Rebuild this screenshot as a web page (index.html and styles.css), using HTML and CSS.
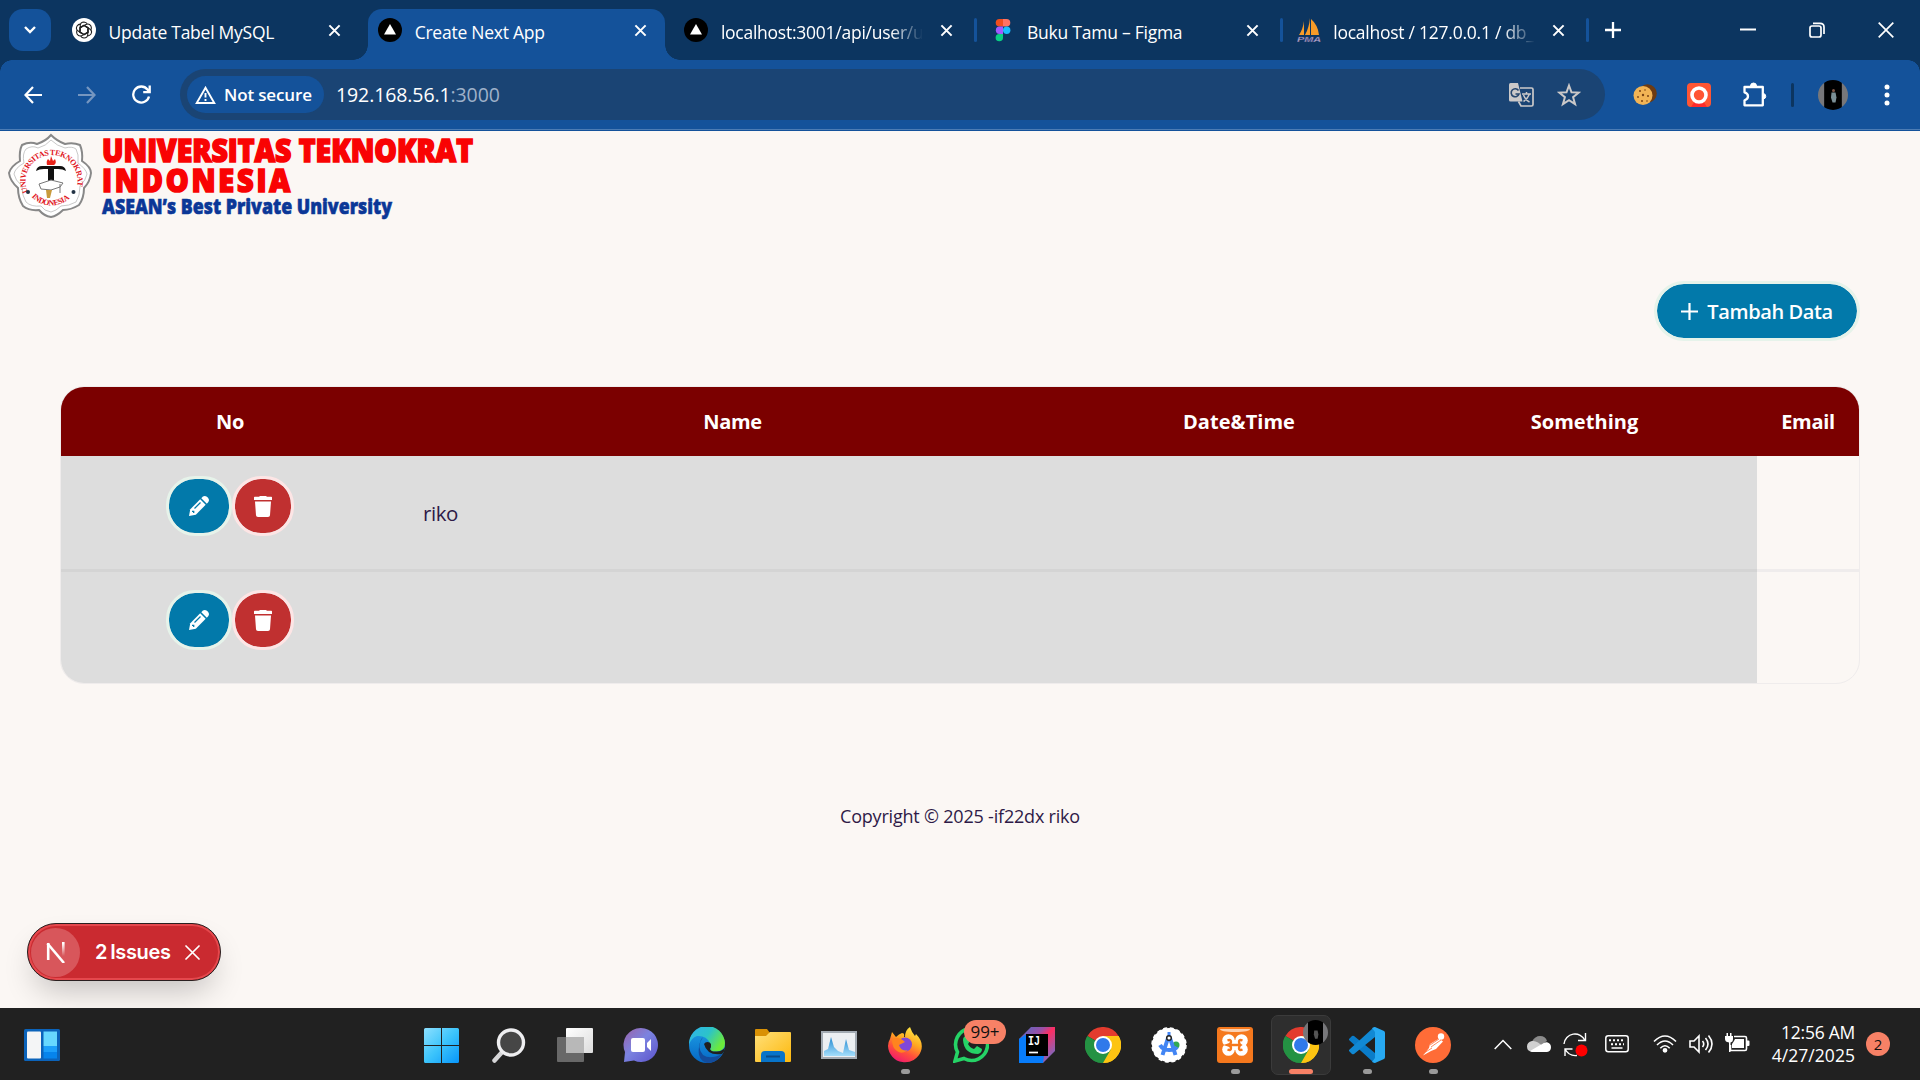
FILE: index.html
```html
<!DOCTYPE html>
<html lang="en">
<head>
<meta charset="utf-8">
<title>Create Next App</title>
<link rel="stylesheet" href="styles.css">
</head>
<body>
<svg width="0" height="0" class="defs" aria-hidden="true">
  <defs>
    <linearGradient id="win" x1="0" y1="0" x2="1" y2="1"><stop offset="0" stop-color="#8de0ff"/><stop offset=".5" stop-color="#3cc4fb"/><stop offset="1" stop-color="#0795fb"/></linearGradient>
    <linearGradient id="grey" x1="0" y1="0" x2="1" y2="1"><stop offset="0" stop-color="#fff"/><stop offset="1" stop-color="#dcdcdc"/></linearGradient>
    <linearGradient id="chat" x1="0" y1="0" x2="1" y2="1"><stop offset="0" stop-color="#9b62a8"/><stop offset=".45" stop-color="#7b83e0"/><stop offset="1" stop-color="#5b52cc"/></linearGradient>
    <linearGradient id="edgeTop" x1="0" y1="0" x2="1" y2=".5"><stop offset="0" stop-color="#2fb2ef"/><stop offset=".55" stop-color="#2cc3c9"/><stop offset="1" stop-color="#6bea3c"/></linearGradient>
    <linearGradient id="edgeBody" x1="0" y1="0" x2="0" y2="1"><stop offset="0" stop-color="#1fa0e6"/><stop offset="1" stop-color="#0567c4"/></linearGradient>
    <linearGradient id="folder" x1="0" y1="0" x2="1" y2="1"><stop offset="0" stop-color="#ffe07a"/><stop offset="1" stop-color="#fdb80c"/></linearGradient>
    <linearGradient id="fox" x1=".8" y1="0" x2=".3" y2="1"><stop offset="0" stop-color="#fff04a"/><stop offset=".4" stop-color="#ffa81f"/><stop offset=".7" stop-color="#ff4f3c"/><stop offset="1" stop-color="#f0176f"/></linearGradient>
    <linearGradient id="ij" x1="0" y1="0" x2="1" y2="1"><stop offset="0" stop-color="#4b6fc8"/><stop offset=".35" stop-color="#9a4fa6"/><stop offset=".5" stop-color="#fe2d62"/><stop offset="1" stop-color="#4f7ce0"/></linearGradient>
    <linearGradient id="wave" x1="0" y1="0" x2="0" y2="1"><stop offset="0" stop-color="#2489cf"/><stop offset="1" stop-color="#a4defc"/></linearGradient>
    <linearGradient id="nfade" x1="0" y1="0" x2="0" y2="1"><stop offset=".1" stop-color="#fff"/><stop offset="1" stop-color="#fff" stop-opacity="0"/></linearGradient>
    <linearGradient id="person" x1="0" y1="0" x2="1" y2="0"><stop offset=".2" stop-color="#77777a"/><stop offset=".22" stop-color="#000"/><stop offset=".78" stop-color="#000"/><stop offset=".8" stop-color="#77777a"/></linearGradient>
    <symbol id="x" viewBox="0 0 14 14"><path d="M1.500 1.500l11 11M12.500 1.500l-11 11" stroke="#fff" stroke-width="2.200" fill="none"/></symbol>
    <symbol id="vercel" viewBox="0 0 24 24"><circle cx="12" cy="12" r="12"/><path d="M12 6l6 10.500H6z" fill="#fff"/></symbol>
    <symbol id="pencil" viewBox="0 0 22 22"><path d="M1 21l1.300-6.800L12.200 4.300l5.500 5.500L7.800 19.700z"/><path d="M13.300 3.200l1.600-1.600q2-1.400 4 .2l1.300 1.300q1.600 2 .2 4l-1.600 1.600z"/><path d="M6.500 13.500l6-6M4 16.300h1.700V18" stroke="#0279aa" stroke-width="1.300" fill="none"/></symbol>
    <symbol id="trash" viewBox="0 0 18 21"><path d="M0 1.500q0-.7.700-.7H5L6 0h6l1 .8h4.300q.7 0 .7.700V4H0zM1 5.500h16l-1 13.700q-.1 1.800-2 1.800H4q-1.900 0-2-1.800z"/></symbol>
    <symbol id="chrome" viewBox="0 0 36 36"><path d="M18 18L2.400 9A18 18 0 0 1 33.600 9z" fill="#e33b2e"/><path d="M18 18L33.600 9A18 18 0 0 1 18 36z" fill="#fdc412"/><path d="M18 18v18A18 18 0 0 1 2.400 9z" fill="#249243"/><path d="M18 9h15.600A18 18 0 0 1 18 36l7.800-13.500z" fill="#fdc412"/><path d="M10.200 22.500L2.400 9A18 18 0 0 0 18 36l7.800-13.500z" fill="#249243"/><circle cx="18" cy="18" r="9" fill="#fff"/><circle cx="18" cy="18" r="7" fill="#3079ea"/></symbol>
  </defs>
</svg>

<header class="tabstrip">
  <button class="tabsearch"><svg width="14" height="10" viewBox="0 0 14 10"><path d="M2 2l5 5 5-5" stroke="#fff" stroke-width="2.400" fill="none"/></svg></button>
  <div class="tab">
    <svg class="fav" viewBox="0 0 24 24"><circle cx="12" cy="12" r="12" fill="#fff"/><g fill="none" stroke="#222" stroke-width="1.100"><path id="knot" d="M8.200 13.500V7.500Q8.500 4 12 4q2.200.2 3.200 1.800M8.200 9.500L12 7.300l4.500 2.600"/><use href="#knot" transform="rotate(60 12 12)"/><use href="#knot" transform="rotate(120 12 12)"/><use href="#knot" transform="rotate(180 12 12)"/><use href="#knot" transform="rotate(240 12 12)"/><use href="#knot" transform="rotate(300 12 12)"/></g></svg>
    <span class="tabname">Update Tabel MySQL</span><svg class="close"><use href="#x"/></svg>
  </div>
  <div class="tab active">
    <svg class="fav"><use href="#vercel"/></svg>
    <span class="tabname">Create Next App</span><svg class="close"><use href="#x"/></svg>
  </div>
  <div class="tab">
    <svg class="fav"><use href="#vercel"/></svg>
    <span class="tabname fade">localhost:3001/api/user/u</span><svg class="close"><use href="#x"/></svg><i class="sep"></i>
  </div>
  <div class="tab">
    <svg class="fav" viewBox="0 0 24 24"><path d="M12 1H8.500a3.800 3.800 0 0 0 0 7.600H12z" fill="#f24e1e"/><path d="M12 1h3.500a3.800 3.800 0 0 1 0 7.600H12z" fill="#ff7262"/><path d="M12 8.600H8.500a3.600 3.600 0 0 0 0 7.300H12z" fill="#a259ff"/><circle cx="15.700" cy="12.200" r="3.700" fill="#1abcfe"/><path d="M8.500 15.900H12v3.600a3.700 3.700 0 1 1-3.500-3.600z" fill="#0acf83"/></svg>
    <span class="tabname">Buku Tamu – Figma</span><svg class="close"><use href="#x"/></svg><i class="sep"></i>
  </div>
  <div class="tab">
    <svg class="fav" viewBox="0 0 24 24"><path d="M7 3v14H2q4-6 5-14zM13 0v17H8q4-7 5-17zM14 1q7 6 8 16h-8z" fill="#f79b28"/><text x="0" y="24" class="pma" textLength="24" lengthAdjust="spacingAndGlyphs">PMA</text></svg>
    <span class="tabname fade">localhost / 127.0.0.1 / db_</span><svg class="close"><use href="#x"/></svg><i class="sep"></i>
  </div>
  <svg class="plus" viewBox="0 0 16 16"><path d="M8 0v16M0 8h16" stroke="#fff" stroke-width="2.300"/></svg>
  <div class="winbtns">
    <svg width="16" height="16" viewBox="0 0 16 16"><path d="M0 7.500h16" stroke="#fff" stroke-width="2"/></svg>
    <svg width="16" height="16" viewBox="0 0 16 16" fill="none" stroke="#fff" stroke-width="1.700"><rect x="1" y="4" width="11" height="11" rx="2"/><path d="M4 1.300h7Q15 1.300 15 5v7"/></svg>
    <svg width="16" height="16" viewBox="0 0 16 16"><path d="M.7.7l14.600 14.600M15.300.7L.7 15.300" stroke="#fff" stroke-width="1.700"/></svg>
  </div>
</header>

<nav class="toolbar">
  <div class="navbtns">
    <svg width="18" height="18" viewBox="0 0 18 18" fill="none" stroke="#fff" stroke-width="2.200"><path d="M18 9H1.500M9 1L1.500 9 9 17"/></svg>
    <svg width="18" height="18" viewBox="0 0 18 18" fill="none" stroke="#7596c0" stroke-width="2.200"><path d="M0 9h16.500M9 1l7.500 8L9 17"/></svg>
    <svg width="19" height="19" viewBox="0 0 19 19" fill="none" stroke="#fff" stroke-width="2.300"><path d="M17 11.500A8 8 0 1 1 15.500 4.500L17 6.500M17.700.5v6.600h-6.500"/></svg>
  </div>
  <div class="omnibox">
    <div class="chip"><svg width="21" height="18" viewBox="0 0 21 18" fill="none" stroke="#fff" stroke-width="1.900"><path d="M10.500 1.700L1.700 17h17.600zM10.500 7v4.500M10.500 13v2"/></svg><span>Not secure</span></div>
    <div class="url">192.168.56.1<span>:3000</span></div>
    <svg class="translate" width="26" height="26" viewBox="0 0 26 26"><path d="M2.500 1H10l4.500 18.500h-12Q1 19.500 1 18V2.500Q1 1 2.500 1z" fill="#cbc9c9"/><path d="M12 6h11.500q1.500 0 1.500 1.500v15q0 1.500-1.500 1.500H13l-2.500-4.500" fill="none" stroke="#cbc9c9" stroke-width="1.700"/><path d="M10.500 8.500A4 4 0 1 0 11 12H7.500" fill="none" stroke="#27476f" stroke-width="1.600"/><path d="M14 12h9M18.500 10v2M21.500 12q-2 5-6 7.500M15.500 13q2 5 6 7" fill="none" stroke="#cbc9c9" stroke-width="1.500"/></svg>
    <svg width="24" height="24" viewBox="0 0 24 24" fill="none" stroke="#cbc9c9" stroke-width="2"><path d="M12 2.500l2.500 6.800 7.300.3-5.700 4.600 2 7-6.100-4-6.100 4 2-7-5.700-4.600 7.300-.3z"/></svg>
  </div>
  <div class="exts">
    <svg width="24" height="24" viewBox="0 0 24 24"><circle cx="14.500" cy="10.500" r="9.300" fill="#6d3b12"/><circle cx="10" cy="12.500" r="9.500" fill="#f2b455"/><g fill="#7a4315"><circle cx="7" cy="8" r="1"/><circle cx="12" cy="7" r=".8"/><circle cx="10" cy="12" r="1.200"/><circle cx="5" cy="14" r=".9"/><circle cx="15" cy="13" r="1"/><circle cx="9" cy="18" r="1"/><circle cx="14" cy="18" r=".8"/></g></svg>
    <svg width="24" height="24" viewBox="0 0 24 24"><rect width="24" height="24" rx="4" fill="#ff5533"/><path d="M4 24l4-6h8l4 6z" fill="#ff2b2b"/><circle cx="12" cy="12" r="7" fill="none" stroke="#fff" stroke-width="3.600"/></svg>
    <svg class="puzzle" width="26" height="26" viewBox="0 0 26 26" fill="none" stroke="#fff" stroke-width="2.300"><path d="M3.500 5h18.300v18.300H3.500v-5q3.500-1 3.500-4t-3.500-4z" stroke-linejoin="round"/><path d="M9.500 4a3 3 0 0 1 6 0zM22.500 11.500a2.800 2.800 0 0 1 0 5.500z" fill="#fff" stroke-width="1"/></svg>
    <i class="bar"></i>
    <svg class="avatar" width="30" height="30" viewBox="0 0 30 30"><circle cx="15" cy="15" r="15" fill="url(#person)"/><circle cx="15.500" cy="10.500" r="1.500" fill="#80584a"/><path d="M13.500 12.500h4l1 5-1 5h-3l-1.500-5z" fill="#7b8f96"/></svg>
    <svg width="6" height="24" viewBox="0 0 6 24" fill="#fff"><circle cx="3" cy="4" r="2.500"/><circle cx="3" cy="12" r="2.500"/><circle cx="3" cy="20" r="2.500"/></svg>
  </div>
</nav>

<main class="page">
  <svg class="logo" width="480" height="96" viewBox="0 0 480 96">
    <path d="M51 4Q57 10 65 13Q73 11 80 14Q83 21 82 30Q91 36 91 42Q90 51 84 57Q84 67 79 74Q71 79 63 79Q57 85 51 86Q44 85 39 79Q29 80 23 75Q18 67 18 57Q10 50 9 42Q11 35 20 30Q19 20 22 14Q30 10 37 13Q46 10 51 4z" fill="#fff" stroke="#888" stroke-width="2"/>
    <path d="M51 9Q57 15 65 17Q72 15 76 18Q79 23 78 32Q86 38 87 43Q86 49 80 55Q80 65 76 71Q69 75 61 75Q56 80 51 81Q44 80 41 75Q31 76 26 71Q22 65 22 55Q15 49 14 43Q15 37 24 32Q22 23 26 18Q32 14 38 17Q46 15 51 9z" fill="none" stroke="#bbb" stroke-width=".8"/>
    <path id="arcTop" d="M28 61A26 26 0 1 1 76 59" fill="none"/><path id="arcBottom" d="M31 65A27 27 0 0 0 72 65" fill="none"/>
    <text class="seal"><textPath href="#arcTop" textLength="98">UNIVERSITAS TEKNOKRAT</textPath></text>
    <text class="seal"><textPath href="#arcBottom" startOffset="1" textLength="42">INDONESIA</textPath></text>
    <circle cx="28" cy="61" r="2" fill="#234"/><circle cx="73.500" cy="61" r="2" fill="#234"/>
    <path d="M36 40q1-5 6-5h18q5 0 6 5-3-2-8-2h-4v13h-6V38h-4q-5 0-8 2z" fill="#111"/>
    <path d="M47 34q-1-4 1-6l2 2 1-5 2 5 2-2q2 4-1 6z" fill="#e9241b"/>
    <path d="M39 53l12-4 12 3-3 4-9 3-10-1z" fill="#fff" stroke="#777"/><path d="M60 53v9" stroke="#777"/><path d="M46 59h6l-2 8h-3z" fill="#c89a3c"/>
    <text x="102" y="31" class="brand red" textLength="371" lengthAdjust="spacingAndGlyphs">UNIVERSITAS TEKNOKRAT</text>
    <text x="102" y="60.500" class="brand red spaced" textLength="191" lengthAdjust="spacingAndGlyphs">INDONESIA</text>
    <text x="102" y="83" class="brand blue" textLength="290" lengthAdjust="spacingAndGlyphs">ASEAN’s Best Private University</text>
  </svg>

  <div class="actions">
    <button class="pill add"><svg width="17" height="17" viewBox="0 0 17 17"><path d="M8.500 0v17M0 8.500h17" stroke="#fff" stroke-width="2.200"/></svg><span>Tambah Data</span></button>
  </div>

  <table class="guests">
    <colgroup><col class="c1"><col class="c2"><col class="c3"><col class="c4"><col class="c5"></colgroup>
    <thead><tr><th>No</th><th>Name</th><th class="wide">Date&amp;Time</th><th class="wide">Something</th><th>Email</th></tr></thead>
    <tbody>
      <tr>
        <td class="ops"><div><button class="pill edit"><svg width="22" height="22"><use href="#pencil"/></svg></button><button class="pill del"><svg width="18" height="21"><use href="#trash"/></svg></button></div></td>
        <td><span class="person">riko</span></td><td></td><td></td><td class="blank"></td>
      </tr>
      <tr>
        <td class="ops"><div><button class="pill edit"><svg width="22" height="22"><use href="#pencil"/></svg></button><button class="pill del"><svg width="18" height="21"><use href="#trash"/></svg></button></div></td>
        <td></td><td></td><td></td><td class="blank"></td>
      </tr>
    </tbody>
  </table>

  <footer class="copy"><span>Copyright © 2025 -if22dx riko</span></footer>

  <div class="issues">
    <span class="nmark"><svg width="22" height="22" viewBox="0 0 22 22" fill="none"><path d="M3.200 19V2" stroke="#fff" stroke-width="2.600"/><path d="M2.500 2.500L19 22" stroke="#fff" stroke-width="2.600"/><path d="M17 1h2.600v14H17z" fill="url(#nfade)"/></svg></span>
    <span class="count">2</span><span class="label">Issues</span>
    <svg width="15" height="15" viewBox="0 0 15 15"><path d="M1 1l13 13M14 1L1 14" stroke="#fff" stroke-width="1.700" stroke-linecap="round"/></svg>
  </div>
</main>

<div class="taskbar">
  <svg class="widgets" width="36" height="32" viewBox="0 0 36 32"><rect width="36" height="32" rx="1.500" fill="#0b63ba"/><rect x="3" y="2.500" width="14" height="27" rx="1" fill="#f4f5f6"/><path d="M19.500 2.500h13.500V17H19.500z" fill="#67d8ff"/><path d="M19.500 17h13.500v6H19.500z" fill="#1c9ffa"/><path d="M19.500 23h13.500v6.500H19.500z" fill="#0684ec"/></svg>
  <div class="apps">
    <span class="app"><svg viewBox="0 0 36 36"><path d="M0 2.500Q0 1 1.500 1H17v17H0zM18 1h15.500Q35 1 35 2.500V18H18zM0 19h17v17H1.500Q0 36 0 34.500zM18 19h17v15.500q0 1.500-1.500 1.500H18z" fill="url(#win)"/></svg></span>
    <span class="app"><svg viewBox="0 0 36 36"><path d="M3.500 33.500l9-10" stroke="#d6d6d8" stroke-width="4.500" stroke-linecap="round"/><circle cx="20" cy="15.500" r="12.500" fill="#464646" stroke="#eeeef0" stroke-width="3.400"/></svg></span>
    <span class="app"><svg viewBox="0 0 36 36"><rect x="9" y="1" width="27" height="25" rx="1" fill="url(#grey)"/><rect x="0" y="10" width="27" height="25" rx="1" fill="#686868"/><path d="M9 10h18v16H9z" fill="#b8b8b8"/></svg></span>
    <span class="app"><svg viewBox="0 0 36 36"><path d="M18 1a17 17 0 1 1-7 32.500L1 35l1-10A17 17 0 0 1 18 1z" fill="url(#chat)"/><rect x="8" y="11" width="14" height="14" rx="2" fill="#fff"/><path d="M24 16l4-4v12l-4-4z" fill="#fff"/></svg></span>
    <span class="app"><svg viewBox="0 0 36 36"><circle cx="18" cy="18" r="18" fill="url(#edgeBody)"/><path d="M14 10Q7 20 14 28q7 5 19-1-5 9-15 9Q8 33 10 20q1-7 4-10z" fill="#134c9c"/><path d="M0 18A18 18 0 0 1 36 16q0 8-8 8.500-7 .5-7-2.500 2-2 0-6Q17 8 8 9q-6 2-8 9z" fill="url(#edgeTop)"/><path d="M15 17a4 4 0 0 1 7 0q.5 3-1 5 1 3 7 2.500 5 0 8-4l-1 4-2 2.500Q18 29 15 17z" fill="#202020"/></svg></span>
    <span class="app"><svg viewBox="0 0 36 36"><path d="M0 3q0-1 1-1h11l3 4-4 4H0z" fill="#d99105"/><path d="M0 9h11l4-4h20q1 0 1 1v28q0 1-1 1H1q-1 0-1-1z" fill="url(#folder)"/><path d="M6 35v-7q0-4 4-4h16q4 0 4 4v7z" fill="#0874c9"/><path d="M11 29.500h14" stroke="#0a4b87" stroke-width="2"/></svg></span>
    <span class="app"><svg viewBox="0 0 36 36"><rect x="1" y="5" width="34" height="26" fill="#eceff2" stroke="#a3abb3" stroke-width="2"/><path d="M3 24l4-2 3-12 3 10 4 4 5 2 3-14 3 11 6 2v4H3z" fill="url(#wave)"/></svg></span>
    <span class="app"><svg viewBox="0 0 36 36"><path d="M3 12l2-7 4 5q3-3 6-4 3 0 2 4h1q0-7 5-10 2 6 5 9l1-2q8 8 5 17A17 17 0 0 1 1 19q0-4 2-7z" fill="url(#fox)"/><circle cx="18" cy="17.500" r="7" fill="#8047d8"/><path d="M5 12q7-3 13 3l-6 3q2 7 9 5-6 5-11 1-5-3-5-12z" fill="#ff841f"/></svg><i class="dot"></i></span>
    <span class="app"><svg viewBox="0 0 36 36"><path d="M2 34l2.500-9A16 16 0 1 1 11 31.500z" fill="none" stroke="#25d366" stroke-width="3.600"/><path d="M10 13q0-4 4-4l3 5-2 3q2 4 6 5l3-3 5 3q0 4-4 5-14 0-15-14z" fill="#25d366"/></svg><b class="badge">99+</b></span>
    <span class="app"><svg viewBox="0 0 36 36"><path d="M0 36V12L12 0h24v24L24 36z" fill="url(#ij)"/><path d="M0 36V12l8-5v22h17l-1 7z" fill="#087cfa"/><path d="M7 7h22v22H7z"/><text x="9" y="18" class="ijt" textLength="12" lengthAdjust="spacingAndGlyphs">IJ</text><path d="M10 25.500h9" stroke="#fff" stroke-width="1.700"/></svg></span>
    <span class="app"><svg><use href="#chrome"/></svg></span>
    <span class="app"><svg viewBox="0 0 36 36"><circle cx="18" cy="18" r="16" fill="#fff" stroke="#fff" stroke-width="2"/><circle cx="18" cy="18" r="17" fill="none" stroke="#fff" stroke-width="1.500" stroke-dasharray="4 2.700"/><circle cx="25" cy="18" r="3.500" fill="#31a853"/><path d="M17 11l-5.500 17M19 11l5.500 17M9 18q3 5 9 5t8-3" fill="none" stroke="#4285f4" stroke-width="4"/><path d="M18 5v4" stroke="#4285f4" stroke-width="3"/><circle cx="18" cy="11" r="2.300" fill="#fff" stroke="#222" stroke-width="1.500"/></svg></span>
    <span class="app"><svg viewBox="0 0 36 36"><rect width="36" height="36" rx="3" fill="#f5781d"/><path d="M3 2h30q0 3-15 3T3 2z" fill="#fff" opacity=".65"/><g fill="#fff"><circle cx="11.500" cy="13.500" r="6.300"/><circle cx="24.500" cy="13.500" r="6.300"/><circle cx="11.500" cy="22.500" r="6.300"/><circle cx="24.500" cy="22.500" r="6.300"/><path d="M12 13h12v10H12z"/></g><path d="M10.500 13.500q3.500-1.500 3.500 1.500 0 2-3.500 3 3.500 1 3.500 3 0 3-3.500 1.500M25.500 13.500Q22 12 22 15q0 2 1.500 3-1.500 1-1.500 3 0 3 3.500 1.500M13 18h10" fill="none" stroke="#f5781d" stroke-width="2.400"/></svg><i class="dot"></i></span>
    <span class="app current"><svg><use href="#chrome"/></svg><svg class="mini" viewBox="0 0 30 30"><circle cx="15" cy="15" r="15" fill="url(#person)"/><path d="M13.500 12.500h4l1 5-1 5h-3l-1.500-5z" fill="#555"/></svg><i class="dot"></i></span>
    <span class="app"><svg viewBox="0 0 36 36"><path d="M0 12l3-3q1-.5 2 0l21 17v10q-1 0-2-1L0 13z" fill="#0a7cc9"/><path d="M0 24l3 3q1 .5 2 0l21-17V0q-1 0-2 1L0 23z" fill="#1189d4"/><path d="M26 0l9 4q1 .5 1 2v24q0 1.500-1 2l-9 4-3-1 3-4V5l-3-4z" fill="#27a9f2"/></svg><i class="dot"></i></span>
    <span class="app"><svg viewBox="0 0 36 36"><circle cx="18" cy="18" r="18" fill="#ff6c37"/><circle cx="26" cy="9.500" r="3.200" fill="#fff"/><path d="M24 11.500l4 3-7 7.500-5 2-8 4.500 6-7.500 1-4z" fill="#fff"/><path d="M15 18l9-6M16 20l10-7M9 26l8-5" stroke="#ff6c37" stroke-width=".8"/></svg><i class="dot"></i></span>
  </div>
  <div class="tray">
    <svg class="up" width="18" height="11" viewBox="0 0 18 11"><path d="M.7 10L9 1.500l8.300 8.500" fill="none" stroke="#fff" stroke-width="1.500"/></svg>
    <svg class="cloud" width="24" height="16" viewBox="0 0 24 16"><path d="M5 5.500Q8 0 13 0q5.500 0 7 5l-8 5z" fill="#8b8b8b"/><path d="M5 16q-5-1-5-5.500T5 5q3-.5 6 1.500l7 5L5 16z" fill="#d0d0d0"/><path d="M3 15l12-7q2-2 5-1.800 4 1 4 5T20 16H5z" fill="#fff"/></svg>
    <svg class="sync" width="25" height="25" viewBox="0 0 25 25"><path d="M1 12A11 11 0 0 1 22 8.500M22.500 1v7.500H15M14 23.500Q6 24.500 2 17M2 24v-7h7.500" fill="none" stroke="#fff" stroke-width="1.400"/><circle cx="18.500" cy="18.500" r="6" fill="#f00"/></svg>
    <svg class="kb" width="24" height="18" viewBox="0 0 24 18" fill="none" stroke="#fff"><rect x=".8" y=".8" width="22.400" height="16" rx="2.500" stroke-width="1.500"/><path d="M4 5.200h16M6 9.200h13" stroke-width="2" stroke-dasharray="2 2"/><path d="M6.500 13h11" stroke-width="1.500"/></svg>
    <svg class="wifi" width="24" height="18" viewBox="0 0 24 18" fill="none" stroke="#fff" stroke-width="1.600"><path d="M1 6.500q11-11 22 0M4 10q8-8 16 0M7.300 13.200q4.700-5 9.400 0"/><circle cx="12" cy="15.300" r="1.600" fill="#fff"/></svg>
    <svg class="vol" width="24" height="20" viewBox="0 0 24 20" fill="none" stroke="#fff" stroke-width="1.600"><path d="M1 7h4l5-5v16l-5-5H1zM13.500 7q2.500 3 0 6M16.500 4q5 6 0 12M19.500 1.500q7 8.500 0 17"/></svg>
    <svg class="bat" width="25" height="20" viewBox="0 0 25 20"><path d="M9 3.500h11q1.500 0 1.500 1.500v11q0 1.500-1.500 1.500H5.500V12" fill="none" stroke="#fff" stroke-width="1.600"/><path d="M9 8l1-2h9v9H7v-4zM22 7.500h1.500q1 0 1 1V12q0 1-1 1H22zM0 3h8v3q0 3-2.500 3.500V19H4V9.500Q0 9 0 6zM1.500 0H3v3H1.500zM5 0h1.500v3H5z" fill="#fff"/></svg>
    <div class="clock"><span class="time">12:56 AM</span><span class="date">4/27/2025</span></div>
    <span class="notif">2</span>
  </div>
</div>
</body>
</html>
```

FILE: styles.css
```css
* { box-sizing: border-box; }
body {
  margin: 0;
  width: 1920px;
  height: 1080px;
  overflow: hidden;
  display: flex;
  flex-direction: column;
  background: #fbf7f4;
  font-family: "Open Sans", "Noto Sans", sans-serif;
}
.defs { position: absolute; }
svg { flex: none; }
button { border: 0; padding: 0; font: inherit; color: inherit; }

/* Browser tabs */
.tabstrip { flex: 0 0 60px; display: flex; background: #0c3560; color: #fff; }
.tabsearch {
  width: 42px; height: 42px; margin: 9px 9px 0; border-radius: 14px;
  background: #14529a; display: flex; align-items: center; justify-content: center;
}
.tab {
  position: relative; z-index: 0;
  flex: 0 0 306.200px; height: 60px; padding: 0 0 0 12px;
  display: flex; align-items: center;
}
.fav { width: 24px; height: 24px; margin-right: 12.500px; }
.tabname { width: 204px; font-size: 17.500px; white-space: nowrap; overflow: hidden; line-height: 30px; padding-top: 3px; letter-spacing: -.25px; }
.fade { -webkit-mask-image: linear-gradient(90deg, #000 84%, transparent); mask-image: linear-gradient(90deg, #000 84%, transparent); width: 202px; margin-right: 2px; }
.close { width: 13px; height: 13px; margin-left: 15px; }
.sep { position: absolute; right: 2px; top: 18px; width: 3px; height: 24px; border-radius: 2px; background: #14529a; }
.active::before {
  content: ""; position: absolute; z-index: -1; left: 2px; right: 7px; top: 9px; bottom: 0;
  border-radius: 14px 14px 0 0; background: #14529a;
}
.active::after {
  content: ""; position: absolute; z-index: -1; left: -13px; right: -8px; bottom: 0; height: 15px;
  background:
    radial-gradient(circle at 0 0, transparent 14.500px, #14529a 15px) 0 0 / 15px 15px no-repeat,
    radial-gradient(circle at 100% 0, transparent 14.500px, #14529a 15px) 100% 0 / 15px 15px no-repeat;
}
.plus { width: 16px; height: 16px; margin: 22px 0 0 14px; }
.winbtns { display: flex; gap: 53px; margin: 22px 26px 0 auto; }

/* Address row */
.toolbar {
  flex: 0 0 71px; display: flex; align-items: flex-start; padding-top: 9px;
  background: linear-gradient(#14529a 69px, #4c7cb4 69px, #4c7cb4 70px, #14529a 70px);
  position: relative;
}
.toolbar::before, .toolbar::after {
  content: ""; position: absolute; top: 0; width: 12px; height: 12px;
  background: radial-gradient(circle at 100% 100%, transparent 11.500px, #0c3560 12px);
}
.toolbar::before { left: 0; }
.toolbar::after { right: 0; transform: scaleX(-1); }
.navbtns { width: 180px; height: 51px; padding-left: 24px; display: flex; gap: 36px; align-items: center; }
.omnibox {
  width: 1425px; height: 51px; border-radius: 26px; background: #1a4474; color: #fff;
  display: flex; align-items: center; padding: 0 24px 0 7px;
}
.chip {
  width: 137px; height: 37px; border-radius: 19px; background: #14529a;
  display: flex; align-items: center; gap: 8px; padding-left: 8px; font-size: 17px; font-weight: 600; letter-spacing: -.15px; white-space: nowrap;
}
.url { margin-left: 12px; font-size: 19.500px; letter-spacing: -.1px; }
.url span { color: #9fb1c9; }
.translate { margin: 0 23px 0 auto; }
.exts { height: 51px; display: flex; align-items: center; padding-left: 28px; }
.exts > svg + svg { margin-left: 30px; }
.exts > svg + .puzzle { margin-left: 30px; }
.bar { width: 3px; height: 24px; border-radius: 2px; background: #0c3560; margin: 0 24px 0 24px; }
.exts .avatar + svg { margin-left: 36px; }

/* Web page */
.page { flex: 1; position: relative; display: flex; flex-direction: column; overflow: hidden; }
.logo { display: block; flex: none; }
.brand { font-family: "Open Sans", sans-serif; font-weight: 800; }
.red { font-size: 31px; fill: #f90303; stroke: #f90303; stroke-width: 1.600px; }
.spaced { letter-spacing: 3px; }
.blue { font-size: 21.500px; fill: #0b3797; stroke: #0b3797; stroke-width: .6px; }
.seal { font: bold 8px "Liberation Serif", serif; fill: #e1141c; }
.pma { font: italic bold 8px "Liberation Sans", sans-serif; fill: #c5c3e0; stroke: #45427a; stroke-width: .4px; }
.actions { display: flex; justify-content: flex-end; padding: 54px 60px 0 0; }
.pill {
  height: 60px; border: 3px solid #e6f3ea; border-radius: 30px; background: #0279aa; background-clip: padding-box;
  color: #fff; display: flex; align-items: center; justify-content: center;
}
.pill svg { fill: #fff; }
.add { width: 206px; gap: 9px; font-size: 20px; font-weight: 600; letter-spacing: -.4px; }
.edit { width: 66px; border-radius: 29px; }
.edit svg { margin-right: 1px; }
.del { width: 62px; border-color: #fde5e5; border-radius: 29px; background-color: #c03030; }
.guests {
  table-layout: fixed; width: 1800px; margin: 45px 0 0 60px;
  border: 1px solid #efecec; border-radius: 24px; border-spacing: 0; overflow: hidden;
  color: #2e1a47;
}
.c1 { width: 338px; } .c2 { width: 667px; } .c3 { width: 346px; } .c4 { width: 345px; } .c5 { width: 102px; }
.guests th { height: 69px; padding: 0; background: #7b0000; color: #fff; font-size: 20px; font-weight: 700; letter-spacing: -.3px; }
.guests th.wide { letter-spacing: .05px; }
.guests td { height: 111px; padding: 20px 24px 0; background: #ddd; vertical-align: top; }
.guests tbody tr:first-child td { height: 116px; border-bottom: 3px solid #d4d4d4; }
.guests td.blank { background: transparent; }
.guests tbody tr:first-child td.blank { border-color: #efecec; }
.guests .ops { padding: 20px 0 0 105px; }
.ops div { display: flex; }
.guests tbody tr:last-child .ops { padding-top: 18px; }
.person { display: block; padding-top: 22px; font-size: 20.500px; line-height: 30px; letter-spacing: -.4px; }
.copy { margin-top: 117px; text-align: center; font-size: 18px; line-height: 30px; color: #2e1a47; letter-spacing: -.2px; }

/* Dev overlay */
.issues {
  position: absolute; left: 27px; top: 792px; width: 194px; height: 58px; border-radius: 29px;
  background: #ca2a30; border: 1.500px solid #2a2020; box-shadow: inset 0 0 0 2px #e5484d, 0 16px 32px -8px rgba(0,0,0,.24);
  display: flex; align-items: center; padding-left: 3px; color: #fff;
  font: 600 20px "Inter", sans-serif; letter-spacing: -.35px;
}
.nmark { width: 49px; height: 49px; border-radius: 50%; background: #d8565b; display: flex; align-items: center; justify-content: center; }
.count { margin-left: 15px; }
.label { margin: 0 14px 0 3px; }

/* Windows taskbar */
.taskbar { flex: 0 0 72px; height: 72px; display: flex; background: #212121; color: #fff; position: relative; }
.widgets { margin: 21px 350px 0 24px; }
.apps { display: flex; }
.app { position: relative; width: 66px; height: 72px; padding: 19px 15px; }
.app:first-child { padding-left: 14px; padding-right: 16px; }
.app svg { width: 36px; height: 36px; display: block; }
.dot { position: absolute; left: 29px; top: 61px; width: 9px; height: 5px; border-radius: 3px; background: #9a9a9a; }
.current { background: #2e2e2e; border: 1px solid #3b3b3b; border-radius: 7px; width: 60px; height: 60px; margin: 7px 3px 5px; padding: 11px; }
.current .dot { left: 17px; top: 53px; width: 24px; background: #f78166; }
.app .mini { position: absolute; left: 31px; top: 4px; width: 25px; height: 25px; }
.badge { position: absolute; left: 26px; top: 12px; width: 42px; height: 24px; border-radius: 12px; background: #f78166; color: #111; font-size: 17px; font-weight: 400; line-height: 24px; text-align: center; z-index: 1; }
.ijt { font: bold 13px "Liberation Mono", monospace; fill: #fff; }
.tray { flex: 1; display: flex; align-items: center; padding-left: 28px; }
.cloud { margin-left: 15px; }
.sync { margin-left: 12px; }
.kb { margin-left: 17px; }
.wifi { margin-left: 24px; }
.vol { margin-left: 12px; }
.bat { margin-left: 12px; margin-top: -3px; }
.clock { width: 105px; display: flex; flex-direction: column; align-items: flex-end; font-size: 17.500px; line-height: 23px; letter-spacing: -.25px; }
.date { letter-spacing: .05px; }
.notif { margin-left: 11px; width: 24px; height: 24px; border-radius: 50%; background: #f78166; color: #111; font-size: 15px; line-height: 24px; text-align: center; }
```
